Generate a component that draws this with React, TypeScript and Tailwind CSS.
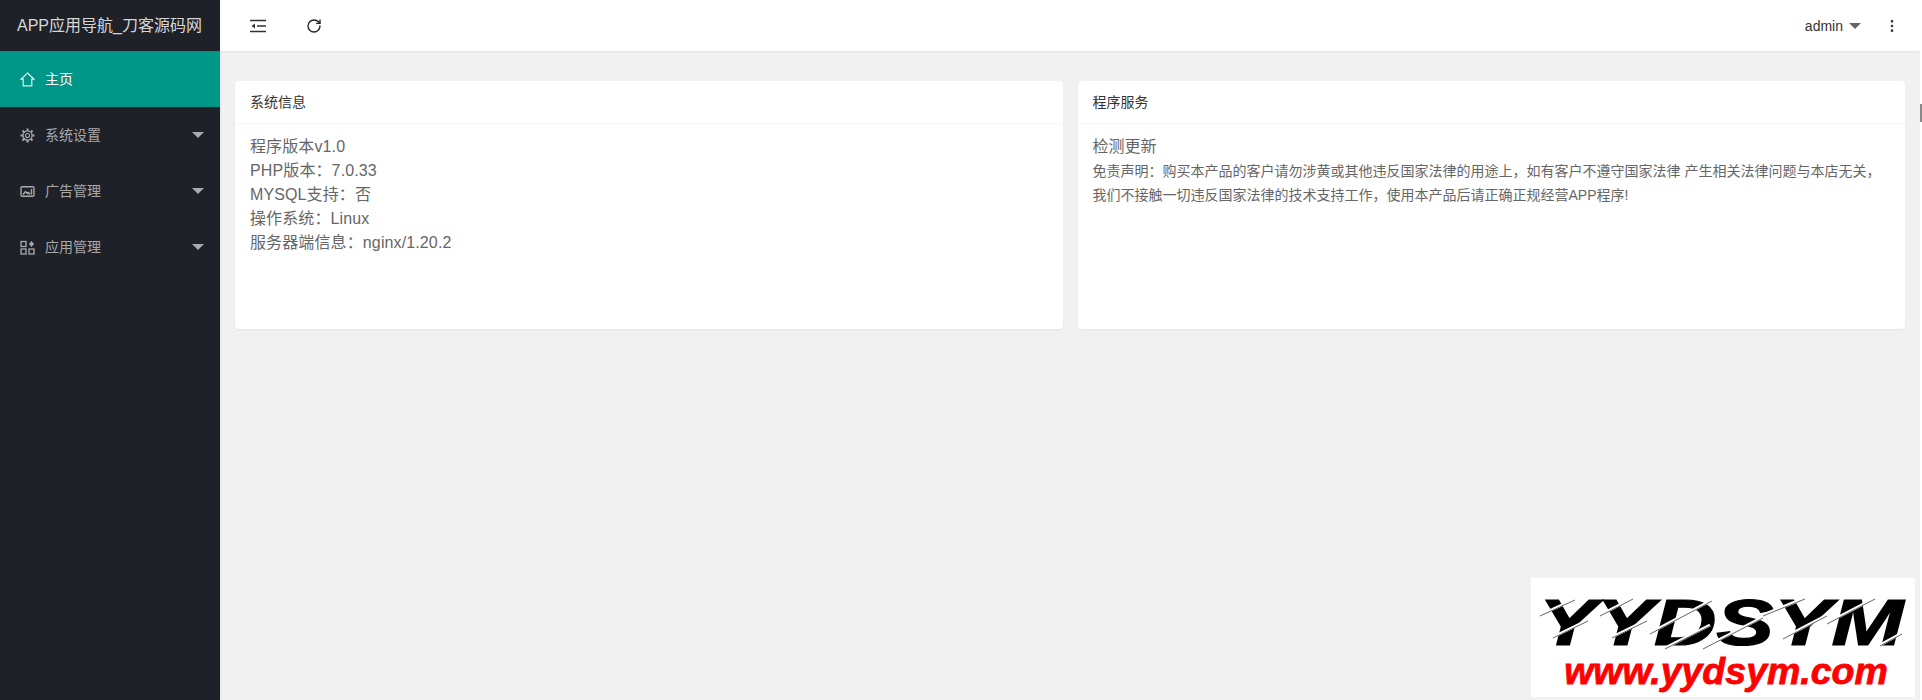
import { EllipsisVertical, RotateCw } from "lucide-react"
import type { ReactNode } from "react"

const font = "font-['Liberation_Sans','Noto_Sans_CJK_SC',sans-serif]"

const Caret = ({ className }: { className: string }) => (
  <span className={`block h-0 w-0 border-x-[6px] border-t-[6px] border-x-transparent ${className}`} />
)

const HomeIcon = () => (
  <svg width="15" height="15" viewBox="0 0 15 15" fill="none" stroke="currentColor" strokeWidth="1.2">
    <path d="M7.5 1 14 7.2h-2.2v6.6H3.2V7.2H1z" />
  </svg>
)

const GearIcon = () => (
  <svg width="15" height="15" viewBox="0 0 15 15" fill="none" stroke="currentColor">
    <circle cx="7.5" cy="7.5" r="4.6" strokeWidth="1.3" />
    <circle cx="7.5" cy="7.5" r="2" strokeWidth="1.1" />
    <path
      d="M7.5.5v2.2M7.5 12.3v2.2M.5 7.5h2.2M12.3 7.5h2.2M2.5 2.5l1.6 1.6M10.9 10.9l1.6 1.6M12.5 2.5l-1.6 1.6M4.1 10.9l-1.6 1.6"
      strokeWidth="2"
    />
  </svg>
)

const ImageIcon = () => (
  <svg width="15" height="15" viewBox="0 0 15 15" fill="none" stroke="currentColor" strokeWidth="1.4">
    <rect x="1" y="2.8" width="13" height="9.4" rx="1.2" />
    <path d="M3 10.5 5.5 7.5l2 2 1-1 1.5 2" />
    <path d="M11.5 5v5.5" />
  </svg>
)

const AppsIcon = () => (
  <svg width="15" height="15" viewBox="0 0 15 15" fill="none" stroke="currentColor" strokeWidth="1.3">
    <rect x="1" y="1.5" width="5" height="5" />
    <rect x="1" y="9" width="5" height="5" />
    <rect x="9" y="9" width="5" height="5" />
    <path d="M11.5 1 14 4l-2.5 3L9 4z" fill="currentColor" stroke="none" />
  </svg>
)

const FoldIcon = () => (
  <svg width="16" height="14" viewBox="0 0 16 14" fill="none" stroke="#333" strokeWidth="1.3">
    <path d="M0 1.5h16M7 7h9M0 12.5h16" />
    <path d="M5 4.5v5L1.5 7z" fill="#333" stroke="none" />
  </svg>
)

const NavItem = ({ icon, label }: { icon: ReactNode; label: string }) => (
  <div className="flex h-14 items-center pl-5 pr-4 text-sm text-[#a9a9a9]">
    <span className="flex w-[25px] shrink-0">{icon}</span>
    <span className="flex-1">{label}</span>
    <Caret className="border-t-[#a9a9a9]" />
  </div>
)

const Card = ({ title, children }: { title: string; children: ReactNode }) => (
  <section className="h-[248px] flex-1 rounded-sm bg-white shadow-[0_1px_2px_0_rgba(0,0,0,0.05)]">
    <h2 className="h-[43px] border-b border-[#f6f6f6] px-[15px] text-sm leading-[42px] text-[#333]">{title}</h2>
    <div className="px-[15px] pt-[11px] text-base leading-6 text-[#666]">{children}</div>
  </section>
)

// slashes cut through the logo letters, coordinates are from the reference crop
const slashes =
  "M9 37 44 21M22 59 57 42M69 37 102 20M81 59 116 42M119 55 181 22M134 70 179 47M172 70 232 39M232 37 274 20M252 60 296 37M296 45 344 20M349 67 371 55"

const Watermark = () => (
  <div className="absolute bottom-[3px] right-[7px] flex h-[119px] w-[384px] flex-col items-center overflow-hidden bg-white font-['Liberation_Sans',sans-serif] italic">
    <span className="mt-5 ml-[-3px] h-[50px] scale-x-[1.35] whitespace-nowrap text-[64px] font-bold leading-[50px] text-black [-webkit-text-stroke:1.2px_black]">
      YYDSYM
    </span>
    <svg className="absolute inset-0" width="384" height="119" viewBox="0 0 384 119" fill="none">
      <path d={slashes} stroke="#fff" strokeWidth="3" />
      <path d={slashes} stroke="#555" strokeWidth="0.9" transform="translate(0 1)" />
    </svg>
    <span className="mt-[1px] ml-[6px] text-[37.5px] font-bold leading-[44px] text-[#ff0000] [-webkit-text-stroke:0.8px_#ff0000]">
      www.yydsym.com
    </span>
  </div>
)

export default function App() {
  return (
    <div className={`relative flex h-[700px] overflow-hidden bg-[#f1f1f1] ${font}`}>
      <aside className="z-10 w-[220px] shrink-0 bg-[#1f2129] shadow-[1px_0_2px_rgba(0,0,0,0.05)]">
        <div className="h-[51px] pl-[17px] text-base leading-[51px] text-[#d6d6d6]">APP应用导航_刀客源码网</div>
        <div className="flex h-14 items-center bg-[#009688] pl-5 text-sm text-white">
          <span className="flex w-[25px] text-[#d5f0ec]">
            <HomeIcon />
          </span>
          主页
        </div>
        <NavItem icon={<GearIcon />} label="系统设置" />
        <NavItem icon={<ImageIcon />} label="广告管理" />
        <NavItem icon={<AppsIcon />} label="应用管理" />
      </aside>

      <div className="flex min-w-0 flex-1 flex-col">
        <header className="flex h-[51px] items-center bg-white pl-[30px] shadow-[0_1px_2px_0_rgba(0,0,0,0.05)]">
          <FoldIcon />
          <RotateCw size={16} strokeWidth={2} className="ml-[40px] text-[#222]" />
          <div className="ml-auto flex items-center text-sm text-[#333]">
            admin
            <Caret className="ml-[6px] border-t-[#666]" />
          </div>
          <EllipsisVertical size={16} strokeWidth={2} className="ml-[23px] mr-[20px] text-[#333]" />
        </header>
        <main className="flex gap-[15px] px-[15px] pt-[30px]">
          <Card title="系统信息">
            <div className="tracking-[0.12px]">
              <p>程序版本v1.0</p>
              <p>PHP版本：7.0.33</p>
              <p>MYSQL支持：否</p>
              <p>操作系统：Linux</p>
              <p>服务器端信息：nginx/1.20.2</p>
            </div>
          </Card>
          <Card title="程序服务">
            <p>检测更新</p>
            <p className="text-sm leading-6">
              免责声明：购买本产品的客户请勿涉黄或其他违反国家法律的用途上，如有客户不遵守国家法律 产生相关法律问题与本店无关，我们不接触一切违反国家法律的技术支持工作，使用本产品后请正确正规经营APP程序!
            </p>
          </Card>
        </main>
      </div>

      <div className="relative w-0.5 shrink-0 bg-white">
        <div className="absolute left-0 top-[104px] h-[18px] w-0.5 bg-[#8a8a8a]" />
      </div>
      <Watermark />
    </div>
  )
}
